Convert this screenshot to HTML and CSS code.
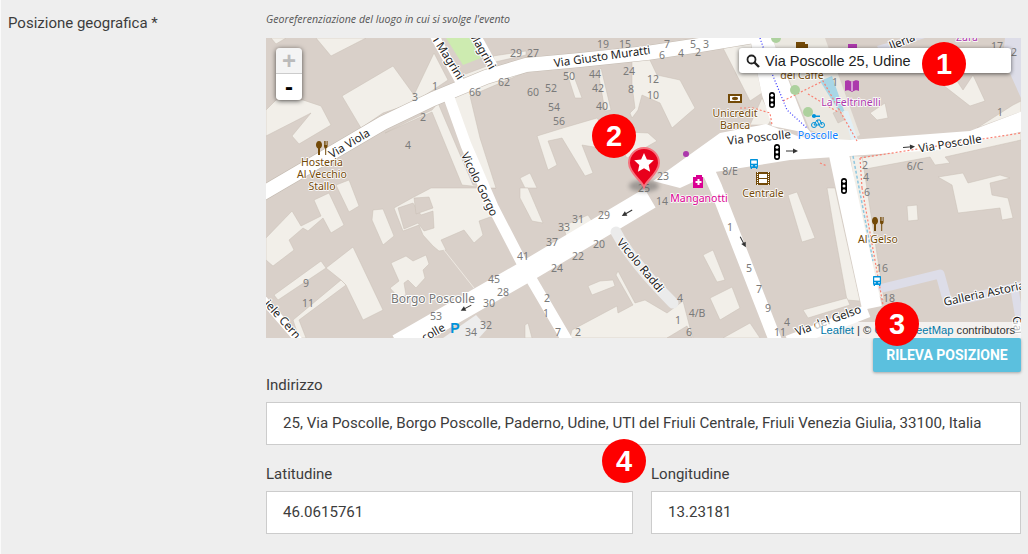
FILE: index.html
```html
<!DOCTYPE html>
<html lang="it">

<head>
    <meta charset="UTF-8">
    <title>Posizione geografica</title>
    <link rel="stylesheet" href="styles.css">
</head>

<body>
    <div class="page">
        <div class="field-label">Posizione geografica *</div>
        <div class="field-body">
            <p class="hint">Georeferenziazione del luogo in cui si svolge l'evento</p>

            <div class="map">
                <svg class="map-svg" viewBox="266 38 755 300" width="755" height="300">
                    <defs>
                        <g id="fork">
                            <path fill="#734a08" d="M3 0c2 0 3 2 3 4s-1 3-2 3.500V14H2V7.500C1 7 0 6 0 4s1-4 3-4zM8 0h.8v4h.6V0h.8v4h.6V0h.8v5c0 1-.6 2-1.400 2.300V14H9.200V7.300C8.400 7 8 6 8 5z"/>
                        </g>
                        <g id="signal">
                            <rect x="-3" y="-8" width="6" height="16" rx="3" fill="#000"/>
                            <circle cy="-4.800" r="1.500" fill="#fff"/>
                            <circle r="1.500" fill="#fff"/>
                            <circle cy="4.800" r="1.500" fill="#fff"/>
                        </g>
                        <g id="bus">
                            <path fill="#0092da" d="M1 0h6c.6 0 1 .4 1 1v7c0 .5-.3.800-.7.900V10H6V9H2v1H.7V8.900C.3 8.800 0 8.500 0 8V1c0-.6.400-1 1-1z"/>
                            <rect x="1.200" y="1.500" width="5.600" height="3.200" fill="#fff"/>
                            <circle cx="2" cy="6.800" r=".8" fill="#fff"/>
                            <circle cx="6" cy="6.800" r=".8" fill="#fff"/>
                        </g>
                        <g id="arrow">
                            <path d="M-6 0H3" stroke="#333" stroke-width="1" fill="none"/>
                            <path d="M1 -2.500L6 0L1 2.500z" fill="#333"/>
                        </g>
                    </defs>

                    <!-- spazi aperti -->
                    <g class="open">
                        <polygon points="316,38 331,56 366,38"/>
                        <polygon points="271,38 286,38 276,44"/>
                        <polygon points="393,66 414,95 434,53 448,80 433,90 413,103 383,113 361,128 342,96"/>
                        <polygon points="266,110 276,100 303,100 321,106 331,125 299,144 292,136 311,113 266,136"/>
                        <polygon points="385,133 409,121 432,110 438,103 473,185 496,188 490,188 462,185 432,112"/>
                        <polygon points="449,98 462,93 499,78 526,68 526,72 470,96 480,138 496,188 490,188"/>
                        <polygon points="493,56 526,51 526,55 495,62"/>
                        <polygon points="463,75 487,66 490,70 465,80"/>
                        <polygon points="336,185 349,180 359,206 349,212"/>
                        <polygon points="266,238 292,211 301,226 321,216 314,200 329,193 344,225 331,233 323,218 308,231 303,228 289,240 294,250 273,266 266,260"/>
                        <polygon points="326,268 353,247 383,310 363,320 346,285 341,280"/>
                        <polygon points="274,295 321,261 326,268 278,300"/>
                        <polygon points="341,280 346,285 299,320 306,338 299,338 293,320"/>
                        <polygon points="373,210 383,209 394,236 383,245 372,220"/>
                        <polygon points="394,208 412,198 431,188 479,188 493,216 479,221 483,235 474,243 464,230 441,240 446,250 439,251 433,246 423,235 419,225 403,231"/>
                        <polygon points="391,263 406,256 413,261 426,255 429,264 423,270 425,278 416,288 408,280 404,283 406,295 398,297 390,288 399,281"/>
                        <polygon points="632,61 648,56 657,75 680,80 695,108 672,128 660,103 642,95 638,110 632,118 630,113 635,108 632,85"/>
                        <polygon points="572,71 582,98 575,98 567,73"/>
                        <polygon points="601,68 611,110 605,111 598,71"/>
                        <polygon points="537,136 563,128 597,118 607,131 648,133 657,141 627,158 622,150 600,148 582,145 593,173 585,176 562,138 548,141 557,165 548,170"/>
                        <polygon points="520,178 530,173 537,188 525,188"/>
                        <polygon points="723,48 750,38 762,93 750,101"/>
                        <polygon points="750,125 762,98 772,118 768,125"/>
                        <polygon points="520,188 528,188 543,223 532,221 520,198"/>
                        <polygon points="563,226 588,215 592,221 567,238"/>
                        <polygon points="588,286 600,281 613,280 615,286 592,295"/>
                        <polygon points="618,271 635,303 645,300 667,313 683,301 690,328 693,338 570,338 572,330 617,306 618,313 633,305 616,275"/>
                        <polygon points="525,325 528,323 532,338 525,338"/>
                        <polygon points="703,255 713,250 725,280 717,282"/>
                        <polygon points="710,298 732,287 740,308 720,320"/>
                        <polygon points="723,338 750,323 760,338"/>
                        <polygon points="943,85 957,81 963,90 973,75 985,101 970,106"/>
                        <polygon points="870,113 885,103 888,118 877,120"/>
                        <polygon points="977,128 1013,105 1021,101 1021,112"/>
                        <polygon points="938,177 963,173 968,183 1000,175 1010,178 990,183 992,195 1008,198 1013,218 1002,220 1000,208 958,213 952,185"/>
                        <polygon points="860,158 1021,132 1021,140 945,157 950,163 935,165 930,157 860,170"/>
                        <polygon points="907,206 917,205 918,220 908,221"/>
                        <polygon points="788,195 797,192 815,238 802,242"/>
                        <polygon points="827,188 835,188 860,301 847,300 835,235"/>
                        <polygon points="803,310 847,298 850,305 808,318"/>
                        <polygon points="850,156 862,156 884,300 870,290"/>
                    </g>
                    <g class="bldg">
                        <polygon points="398,208 413,203 421,215 433,211 434,228 424,231 418,223 404,229"/>
                        <polygon points="414,198 429,197 433,208 416,214"/>
                        <polygon points="667,338 687,326 692,338"/>
                    </g>
                    <path class="alley" d="M444 250L474 288"/>
                    <polygon class="paved" points="443,338 476,315 488,328 479,338"/>
                    <polygon points="446,38 473,38 481,58 463,65" fill="#cdebb0"/>

                    <!-- piazza -->
                    <polygon class="plaza" points="772,38 825,38 860,135 845,143 810,130"/>
                    <polygon points="820,81 832,76 845,113 838,110" fill="#a8d6e6"/>
                    <polygon points="843,111 848,111 860,146 853,146" fill="#e2eff5"/>
                    <polygon class="bldg-solid" points="833,113 840,110 844,120 838,123"/>

                    <!-- strade -->
                    <g class="road-edge">
                        <path d="M260 195L383 123L433 99L486 77L526 65L580 60L647 53L700 45L760 35"/>
                    </g>
                    <g class="road">
                        <path stroke-width="14" d="M260 195L383 123L433 99L486 77L526 65L580 60L647 53L700 45L760 35"/>
                        <path stroke-width="22" d="M398 345L527 271L650 198"/>
                        <path stroke-width="11" d="M447 92L466 145L493 207L523 265L568 342"/>
                        <path stroke-width="9" d="M434 35L460 82"/>
                        <path stroke-width="9" d="M476 35L493 66"/>
                        <path stroke-width="13" d="M707 168L716 188L776 342"/>
                        <path stroke-width="20" d="M838 150L846 188L872 308"/>
                        <path stroke-width="13" d="M788 342L868 311"/>
                        <path stroke-width="8" d="M262 298L300 342"/>
                    </g>
                    <polygon class="road-fill" points="653,181 720,133 766,124 800,137 850,140 970,131 1025,110 1025,131 937,150 850,156 790,160 715,172 680,188"/>
                    <polygon class="road-fill" points="750,38 772,38 807,128 812,134 772,126 762,95"/>
                    <path class="footway" d="M616 232Q632 262 673 303"/>
                    <path class="lane" stroke-width="9" d="M883 288L940 274L948 303L1025 285"/>
                    <path class="lane" stroke-width="8" d="M1015 292L1023 340"/>
                    <polygon class="lane-fill" points="1005,38 1021,38 1021,98 1003,58"/>
                    <polygon class="lane-fill" points="877,46 905,38 925,38 880,52"/>

                    <path class="path-red" d="M783 101L823 81L857 141M808 94L838 112M860 158L1021 133M862 188L883 305M740 108L753 108L770 113L772 125M820 163L827 166M860 158L862 188"/>
                    <path class="path-blue" d="M760 38L773 76L787 110L807 128"/>
                    <path class="path-cyan" d="M853 156L873 261"/>
                    <circle cx="795" cy="90" r="5" fill="#add19e"/>
                    <circle cx="808" cy="112" r="5" fill="#add19e"/>
                    <circle cx="776" cy="38" r="5" fill="#add19e"/>

                    <!-- numeri civici -->
                    <g class="num">
                        <text x="516" y="53">29</text><text x="533" y="53">27</text><text x="603" y="44">19</text>
                        <text x="625" y="44">15</text><text x="569" y="76">50</text><text x="595" y="74">44</text>
                        <text x="629" y="71">24</text><text x="653" y="79">12</text><text x="504" y="82">62</text>
                        <text x="475" y="92">66</text><text x="533" y="92">60</text><text x="551" y="88">52</text>
                        <text x="598" y="88">42</text><text x="631" y="89">8</text><text x="653" y="95">10</text>
                        <text x="554" y="107">54</text><text x="602" y="106">40</text><text x="559" y="121">56</text>
                        <text x="435" y="86">1</text><text x="415" y="97">3</text><text x="423" y="117">2</text>
                        <text x="408" y="145">4</text><text x="667" y="44">7</text><text x="693" y="44">5</text>
                        <text x="706" y="44">3</text><text x="662" y="55">6</text><text x="681" y="53">4</text>
                        <text x="698" y="52">2</text><text x="997" y="46">17</text><text x="1014" y="52">2</text>
                        <text x="835" y="82">1</text><text x="1000" y="112">1</text><text x="663" y="176">23</text>
                        <text x="730" y="171">8/E</text><text x="865" y="165">2</text><text x="866" y="177">4</text>
                        <text x="867" y="192">6</text><text x="915" y="166">6/C</text><text x="730" y="227">1</text>
                        <text x="749" y="268">5</text><text x="759" y="289">7</text><text x="768" y="308">9</text>
                        <text x="787" y="322">4</text><text x="780" y="332">11</text>
                        <text x="882" y="268">16</text><text x="889" y="298">18</text><text x="662" y="201">14</text>
                        <text x="604" y="215">29</text><text x="578" y="219">31</text><text x="564" y="227">33</text>
                        <text x="552" y="242">37</text><text x="599" y="244">20</text><text x="578" y="256">22</text>
                        <text x="557" y="268">24</text><text x="523" y="256">41</text><text x="494" y="279">45</text>
                        <text x="503" y="292">28</text><text x="489" y="303">30</text><text x="436" y="316">53</text>
                        <text x="486" y="325">32</text><text x="471" y="332">34</text><text x="306" y="283">9</text>
                        <text x="308" y="303">11</text><text x="547" y="298">2</text><text x="546" y="313">1</text>
                        <text x="558" y="332">7</text><text x="578" y="332">2</text><text x="680" y="298">4</text>
                        <text x="697" y="313">4/B</text><text x="678" y="320">1</text><text x="689" y="332">6</text>
                        <text x="644" y="188">25</text>
                    </g>

                    <!-- nomi delle strade -->
                    <g class="street">
                        <text transform="translate(602 56) rotate(-8)">Via Giusto Muratti</text>
                        <text transform="translate(349 143) rotate(-31)">Via Viola</text>
                        <text transform="translate(480 184) rotate(64)">Vicolo Gorgo</text>
                        <text transform="translate(641 265) rotate(50)">Vicolo Raddi</text>
                        <text transform="translate(449 58) rotate(58)">i Magrini</text>
                        <text transform="translate(483 50) rotate(60)">Magrini</text>
                        <text transform="translate(759 137) rotate(-6)">Via Poscolle</text>
                        <text transform="translate(950 143) rotate(-9)">Via Poscolle</text>
                        <text transform="translate(828 320) rotate(-20)">Via del Gelso</text>
                        <text transform="translate(984 293) rotate(-12)">Galleria Astoria</text>
                        <text transform="translate(1018 325) rotate(85)">Gal</text>
                        <text transform="translate(283 319) rotate(48)">iele Cern</text>
                        <text transform="translate(433 332) rotate(-30)">colle</text>
                        <text transform="translate(902 41) rotate(-22)">lleria</text>
                    </g>
                    <text class="place" x="433" y="303">Borgo Poscolle</text>

                    <!-- punti di interesse -->
                    <g class="poi brown">
                        <text x="322" y="166">Hosteria</text><text x="322" y="178">Al Vecchio</text><text x="322" y="190">Stallo</text>
                        <text x="735" y="117">Unicredit</text><text x="735" y="129">Banca</text>
                        <text x="763" y="197">Centrale</text><text x="878" y="243">Al Gelso</text>
                        <text x="802" y="79">del Caffè</text>
                    </g>
                    <text class="poi blue" x="818" y="139">Poscolle</text>
                    <text class="poi pink" x="699" y="202">Manganotti</text>
                    <text class="poi violet" x="851" y="106">La Feltrinelli</text>
                    <text class="poi violet" x="967" y="41">Zara</text>

                    <use href="#fork" x="316" y="141"/>
                    <use href="#fork" x="872" y="217"/>
                    <use href="#signal" x="772" y="100"/>
                    <use href="#signal" x="777" y="152"/>
                    <use href="#signal" x="844" y="186"/>
                    <use href="#bus" x="750" y="159"/>
                    <use href="#bus" x="873" y="276"/>
                    <use href="#arrow" transform="translate(792 151)"/>
                    <use href="#arrow" transform="translate(909 147) rotate(-4)"/>
                    <use href="#arrow" transform="translate(627 213) rotate(150)"/>
                    <use href="#arrow" transform="translate(466 308) rotate(152)"/>
                    <use href="#arrow" transform="translate(743 242) rotate(62)"/>

                    <!-- banca -->
                    <rect x="728" y="94" width="14" height="9" fill="#734a08"/>
                    <rect x="730" y="96" width="10" height="5" fill="#fff"/>
                    <ellipse cx="735" cy="98.500" rx="3" ry="1.700" fill="#734a08"/>
                    <!-- cinema -->
                    <rect x="756" y="172" width="14" height="13" fill="#734a08"/>
                    <rect x="759" y="174" width="8" height="4" fill="#fff"/>
                    <rect x="759" y="179" width="8" height="4" fill="#fff"/>
                    <path stroke="#fff" stroke-width="1" stroke-dasharray="1 1" d="M757.500 172V185M768.500 172V185"/>
                    <!-- farmacia -->
                    <path fill="#da0092" d="M696 175h6v2h1v11h-10v-11h3z"/>
                    <path stroke="#fff" stroke-width="2" d="M698.500 179v6M695.500 182h6"/>
                    <circle cx="686" cy="154" r="3" fill="#ac39ac"/>
                    <!-- libreria -->
                    <path fill="#ac39ac" d="M845 81c2-1 4-1 7 1 3-2 5-2 7-1v10c-2-1-4-1-7 1-3-2-5-2-7-1z"/>
                    <path stroke="#fff" d="M852 82v9"/>
                    <!-- bici -->
                    <path fill="#0092da" d="M812 115.500h8v1.500h-8z"/>
                    <circle cx="814" cy="116" r="2" fill="#0092da"/>
                    <g fill="none" stroke="#0092da" stroke-width="1">
                        <circle cx="814" cy="125" r="2.500"/>
                        <circle cx="822" cy="125" r="2.500"/>
                        <path d="M814 125l3-5h3l2 5M817 120l2 5h-5"/>
                    </g>
                    <!-- caffe -->
                    <path fill="#734a08" d="M796 42h9v9h-9zM805 44h3v5h-3z"/>
                    <path fill="#ac39ac" d="M848 44h9v6h-9z"/>
                    <text class="parking" x="455" y="333">P</text>

                    <!-- marker -->
                    <ellipse class="marker-shadow" cx="644" cy="186" rx="15" ry="6"/>
                    <path fill="#e8001c" stroke="#f4747f" stroke-width="2" d="M644 187c-2-6-15-14-15-24a15 15 0 0 1 30 0c0 10-13 18-15 24z"/>
                    <polygon fill="#fff" points="644,153 646.900,159.400 653.800,160.200 648.700,164.900 650.100,171.800 644,168.300 637.900,171.800 639.300,164.900 634.200,160.200 641.100,159.400"/>
                </svg>

                <div class="zoom">
                    <div class="zoom-btn off">+</div>
                    <div class="zoom-btn">-</div>
                </div>

                <div class="search">
                    <svg class="search-icon" width="14" height="14" viewBox="0 0 14 14">
                        <circle cx="5.500" cy="5.500" r="4" fill="none" stroke="#222" stroke-width="1.800"/>
                        <path d="M8.500 8.500L13 13" stroke="#222" stroke-width="2.400"/>
                    </svg>
                    <span>Via Poscolle 25, Udine</span>
                </div>

                <div class="attribution"><a>Leaflet</a> | © <a>OpenStreetMap</a> contributors</div>
            </div>

            <div class="map-actions">
                <button class="btn-locate">RILEVA POSIZIONE</button>
            </div>

            <div class="form-group">
                <label>Indirizzo</label>
                <div class="input">25, Via Poscolle, Borgo Poscolle, Paderno, Udine, UTI del Friuli Centrale, Friuli Venezia Giulia, 33100, Italia</div>
            </div>

            <div class="form-row">
                <div class="form-group">
                    <label>Latitudine</label>
                    <div class="input">46.0615761</div>
                </div>
                <div class="form-group">
                    <label>Longitudine</label>
                    <div class="input">13.23181</div>
                </div>
            </div>
        </div>

        <div class="badge badge-1">1</div>
        <div class="badge badge-2">2</div>
        <div class="badge badge-3">3</div>
        <div class="badge badge-4">4</div>
    </div>
</body>

</html>
```

FILE: styles.css
```css
html, body {
    margin: 0;
    padding: 0;
    height: 554px;
    overflow: hidden;
}

body {
    background-color: #eeeeee;
    color: #3c3c3c;
    font-family: Roboto, "Liberation Sans", sans-serif;
}

.page {
    position: relative;
    display: grid;
    grid-template-columns: 258px 755px;
    height: 554px;
    box-sizing: border-box;
    padding-left: 7px;
    border-left: 1px solid #fafafa;
}

.field-label {
    font-size: 15px;
    line-height: 20px;
    padding-top: 13px;
}

.hint {
    margin: 0;
    height: 38px;
    box-sizing: border-box;
    padding-top: 12px;
    font-family: "Open Sans", sans-serif;
    font-style: italic;
    font-size: 10.600px;
    line-height: 14px;
    color: #555;
}

.map {
    position: relative;
    width: 755px;
    height: 300px;
    overflow: hidden;
    background-color: #d9d0c9;
}

.map-svg {
    display: block;
}

.open polygon {
    fill: #f2efe9;
    stroke: #c9bfb5;
    stroke-width: .5;
}

.bldg polygon, .bldg-solid {
    fill: #d9d0c9;
    stroke: #c9bfb5;
    stroke-width: .5;
}

.alley {
    fill: none;
    stroke: #eee9e2;
    stroke-width: 1;
}

.paved {
    fill: #ededed;
}

.plaza {
    fill: #ebe8e1;
}

.road, .road-edge, .footway, .lane {
    fill: none;
    stroke-linejoin: round;
}

.road {
    stroke: #fff;
}

.road-fill {
    fill: #fff;
}

.road-edge {
    stroke: #c4bbb1;
    stroke-width: 15;
}

.footway {
    stroke: #ebebeb;
    stroke-width: 11;
    stroke-linecap: round;
}

.lane {
    stroke: #dddde8;
    stroke-linecap: round;
}

.lane-fill {
    fill: #dddde8;
}

.path-red {
    fill: none;
    stroke: #fa8072;
    stroke-width: 1.200;
    stroke-dasharray: 2 2;
}

.path-blue {
    fill: none;
    stroke: #3030ff;
    stroke-width: 1.200;
    stroke-dasharray: 1 2;
}

.path-cyan {
    fill: none;
    stroke: #8fc8e0;
    stroke-width: 1.500;
    stroke-dasharray: 3 2;
}

.marker-shadow {
    fill: #555;
    opacity: .45;
    filter: blur(2px);
}

.num text {
    font-family: "Noto Sans", sans-serif;
    font-size: 10.500px;
    fill: #7a7a7a;
    text-anchor: middle;
    dominant-baseline: central;
}

.street text {
    font-family: "Noto Sans", sans-serif;
    font-size: 11.500px;
    fill: #222;
    text-anchor: middle;
    dominant-baseline: central;
    stroke: #fff;
    stroke-width: 2px;
    paint-order: stroke;
}

.place {
    font-family: "Noto Sans", sans-serif;
    font-size: 12px;
    fill: #777;
    text-anchor: middle;
    stroke: #fff;
    stroke-width: 2px;
    paint-order: stroke;
}

.poi {
    font-family: "Noto Sans", sans-serif;
    font-size: 10.500px;
    text-anchor: middle;
    stroke: #fff;
    stroke-width: 1.500px;
    paint-order: stroke;
}

.brown {
    fill: #734a08;
}

.blue {
    fill: #0a7cff;
}

.pink {
    fill: #da0092;
}

.violet {
    fill: #ac39ac;
}

.parking {
    font-family: "Liberation Sans", sans-serif;
    font-size: 14px;
    font-weight: bold;
    fill: #0092da;
    text-anchor: middle;
}

.zoom {
    position: absolute;
    left: 10px;
    top: 10px;
    width: 26px;
    border-radius: 4px;
    box-shadow: 0 1px 5px rgba(0, 0, 0, .65);
    overflow: hidden;
}

.zoom-btn {
    height: 26px;
    line-height: 26px;
    text-align: center;
    font-family: "Liberation Sans", sans-serif;
    font-size: 24px;
    font-weight: bold;
    color: #000;
    background-color: #fff;
}

.zoom-btn.off {
    color: #bbb;
    background-color: #f4f4f4;
    border-bottom: 1px solid #ccc;
    box-sizing: border-box;
}

.search {
    position: absolute;
    left: 473px;
    top: 10px;
    width: 272px;
    height: 25px;
    box-sizing: border-box;
    display: flex;
    align-items: center;
    gap: 5px;
    padding-left: 7px;
    border-radius: 3px;
    background-color: #fff;
    box-shadow: 0 1px 4px rgba(0, 0, 0, .6);
    font-family: "Liberation Sans", sans-serif;
    font-size: 14.500px;
    color: #222;
}

.attribution {
    position: absolute;
    right: 0;
    bottom: 0;
    height: 16px;
    line-height: 16px;
    padding: 0 6px 0 5px;
    background-color: rgba(255, 255, 255, .7);
    font-family: "Liberation Sans", sans-serif;
    font-size: 11.200px;
    color: #333;
}

.attribution a {
    color: #0078a8;
}

.map-actions {
    display: flex;
    justify-content: flex-end;
}

.btn-locate {
    width: 148px;
    height: 34px;
    padding: 0;
    border: 0;
    border-radius: 2px;
    background-color: #5bc0de;
    box-shadow: 0 1px 3px rgba(0, 0, 0, .3);
    color: #fff;
    font-family: Roboto, sans-serif;
    font-size: 14px;
    font-weight: bold;
}

.form-group label {
    display: block;
    font-size: 15px;
    line-height: 20px;
    margin-bottom: 7px;
}

.field-body > .form-group {
    margin-top: 3px;
}

.input {
    height: 43px;
    box-sizing: border-box;
    padding: 0 16px;
    line-height: 41px;
    background-color: #fff;
    border: 1px solid #ccc;
    font-size: 15.100px;
    white-space: nowrap;
    overflow: hidden;
}

.form-row {
    display: grid;
    grid-template-columns: 367px 370px;
    column-gap: 18px;
    margin-top: 19px;
}

.badge {
    position: absolute;
    width: 44px;
    height: 44px;
    border-radius: 50%;
    background-color: #fe0000;
    color: #fff;
    text-align: center;
    font-family: "Liberation Sans", sans-serif;
    font-size: 29px;
    font-weight: bold;
    line-height: 44px;
}

.badge-1 {
    left: 921px;
    top: 42px;
}

.badge-2 {
    left: 591px;
    top: 114px;
}

.badge-3 {
    left: 874px;
    top: 302px;
}

.badge-4 {
    left: 601px;
    top: 439px;
}
```
